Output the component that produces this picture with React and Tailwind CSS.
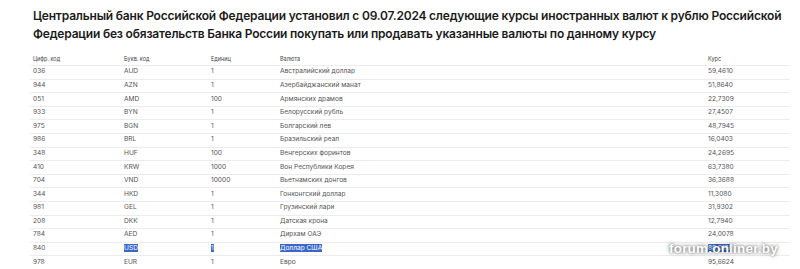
const rows = [
  ['036', 'AUD', '1', 'Австралийский доллар', '59,4610'],
  ['944', 'AZN', '1', 'Азербайджанский манат', '51,8640'],
  ['051', 'AMD', '100', 'Армянских драмов', '22,7309'],
  ['933', 'BYN', '1', 'Белорусский рубль', '27,4507'],
  ['975', 'BGN', '1', 'Болгарский лев', '48,7945'],
  ['986', 'BRL', '1', 'Бразильский реал', '16,0403'],
  ['348', 'HUF', '100', 'Венгерских форинтов', '24,2695'],
  ['410', 'KRW', '1000', 'Вон Республики Корея', '63,7380'],
  ['704', 'VND', '10000', 'Вьетнамских донгов', '36,3688'],
  ['344', 'HKD', '1', 'Гонконгский доллар', '11,3080'],
  ['981', 'GEL', '1', 'Грузинский лари', '31,9302'],
  ['208', 'DKK', '1', 'Датская крона', '12,7940'],
  ['784', 'AED', '1', 'Дирхам ОАЭ', '24,0078'],
  ['840', 'USD', '1', 'Доллар США', '88,0176'],
  ['978', 'EUR', '1', 'Евро', '95,6624'],
];

const Sel = ({ on, children }) =>
  on ? <span className="bg-[#3867c8] text-white">{children}</span> : children;

export default function App() {
  return (
    <div className="relative w-[800px] h-[269px] overflow-hidden bg-white font-['Inter',sans-serif]">
      <h1 className="pl-[33px] pt-[7px] text-[12px] leading-[18px] font-semibold text-[#1b1b1b] tracking-[-0.2px] whitespace-nowrap">
        Центральный банк Российской Федерации установил с 09.07.2024 следующие курсы иностранных валют к рублю Российской
        <br />
        Федерации без обязательств Банка России покупать или продавать указанные валюты по данному курсу
      </h1>

      <div className="mt-[10px] ml-[30px] w-[760px] text-[#555]">
        <div className="grid grid-cols-[91px_87px_69px_428px_1fr] h-[13px] items-center border-b border-[#ececec] text-[5.5px] text-[#444] pl-[3px]">
          <span>Цифр. код</span>
          <span>Букв. код</span>
          <span>Единиц</span>
          <span>Валюта</span>
          <span>Курс</span>
        </div>
        {rows.map((r) => {
          const on = r[1] === 'USD';
          return (
            <div
              key={r[0]}
              className="grid grid-cols-[91px_87px_69px_428px_1fr] h-[13.6px] items-center border-b border-[#ececec] text-[6.6px] pl-[3px]"
            >
              <span>{r[0]}</span>
              <span><Sel on={on}>{r[1]}</Sel></span>
              <span><Sel on={on}>{r[2]}</Sel></span>
              <span><Sel on={on}>{r[3]}</Sel></span>
              <span><Sel on={on}>{r[4]}</Sel></span>
            </div>
          );
        })}
      </div>

      <div className="absolute left-[669px] top-[239px] text-[13.5px] font-bold text-white tracking-[0.2px] font-['Liberation_Sans',sans-serif] [text-shadow:0_0_4px_rgba(0,0,0,0.55),0_0_2px_rgba(0,0,0,0.4)]">
        forum.onliner.by
      </div>
    </div>
  );
}
